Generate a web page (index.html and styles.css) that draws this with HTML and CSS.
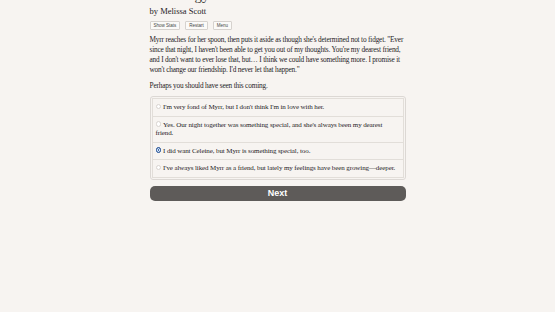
FILE: index.html
```html
<!DOCTYPE html>
<html>
<head>
<meta charset="utf-8">
<link rel="stylesheet" href="styles.css">
</head>
<body>
<div class="page">
  <h1 class="title">Astrology</h1>
  <div class="author">by Melissa Scott</div>
  <div class="buttons">
    <span class="btn">Show Stats</span>
    <span class="btn">Restart</span>
    <span class="btn">Menu</span>
  </div>
  <p class="text">Myrr reaches for her spoon, then puts it aside as though she's determined not to fidget. "Ever since that night, I haven't been able to get you out of my thoughts. You're my dearest friend, and I don't want to ever lose that, but&hellip; I think we could have something more. I promise it won't change our friendship. I'd never let that happen."</p>
  <p class="text">Perhaps you should have seen this coming.</p>
  <div class="choices">
    <label class="choice"><span class="radio"></span>I'm very fond of Myrr, but I don't think I'm in love with her.</label>
    <label class="choice"><span class="radio"></span>Yes. Our night together was something special, and she's always been my dearest friend.</label>
    <label class="choice"><span class="radio on"></span>I did want Celeine, but Myrr is something special, too.</label>
    <label class="choice"><span class="radio"></span>I've always liked Myrr as a friend, but lately my feelings have been growing&mdash;deeper.</label>
  </div>
  <div class="next">Next</div>
</div>
</body>
</html>
```

FILE: styles.css
```css
html, body {
  margin: 0;
  padding: 0;
  background: #f7f4f1;
}
body {
  font-family: "Liberation Serif", "Times New Roman", serif;
  color: #26231f;
}
.page {
  width: 256px;
  margin: 0 auto;
  margin-top: -14px;
}
.title {
  margin: 0;
  font-size: 15px;
  line-height: 18px;
  font-weight: normal;
  color: #3a3634;
}
.author {
  font-size: 8.5px;
  line-height: 11px;
  margin-top: 2px;
}
.buttons {
  display: flex;
  gap: 5px;
  margin-top: 4px;
}
.btn {
  font-family: "Liberation Sans", Arial, sans-serif;
  font-size: 4.5px;
  line-height: 7px;
  padding: 0 3px;
  border: 1px solid #d6d2ce;
  border-radius: 1px;
  background: #fbfaf8;
  color: #444;
}
.text {
  font-size: 7.3px;
  letter-spacing: -0.18px;
  line-height: 10px;
  margin: 5px 0 0 0;
}
.text + .text {
  margin-top: 6px;
}
.choices {
  margin-top: 5px;
  border: 1px solid #dcd8d4;
  border-radius: 3px;
  padding: 1px;
}
.choice {
  display: block;
  font-size: 7px;
  letter-spacing: -0.1px;
  line-height: 8.5px;
  padding: 4px 6px 4px 3px;
  border: 1px solid #e2ded9;
  border-top: none;
}
.choice:first-child {
  border-top: 1px solid #e2ded9;
}
.radio {
  display: inline-block;
  width: 3.5px;
  height: 3.5px;
  border: 1px solid #d8d4d0;
  border-radius: 50%;
  background: #fff;
  margin-right: 2px;
  vertical-align: 0;
}
.radio.on {
  background: #3a6fb5;
  border-color: #2a5699;
  box-shadow: inset 0 0 0 0.8px #fff;
}
.next {
  margin-top: 6px;
  height: 15px;
  line-height: 15px;
  background: #5e5b59;
  border-radius: 5px;
  color: #fff;
  text-align: center;
  font-family: "Liberation Sans", Arial, sans-serif;
  font-weight: bold;
  font-size: 9px;
}
```
